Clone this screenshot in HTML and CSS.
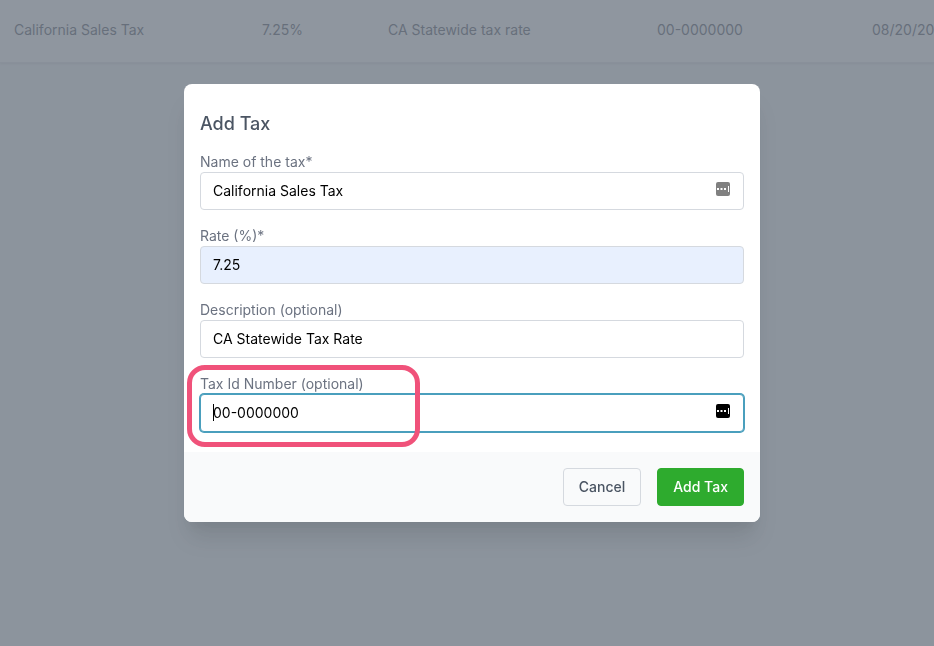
FILE: index.html
```html
<!DOCTYPE html>
<html lang="en">
<head>
    <meta charset="UTF-8">
    <meta name="viewport" content="width=device-width, initial-scale=1.0">
    <title>Add Tax</title>
    <link rel="stylesheet" href="styles.css">
</head>
<body>

    <!-- Tax list -->
    <main class="tax-list">
        <table class="tax-table">
            <tbody>
                <tr>
                    <td class="col-name">California Sales Tax</td>
                    <td class="col-rate">7.25%</td>
                    <td class="col-description">CA Statewide tax rate</td>
                    <td class="col-number">00-0000000</td>
                    <td class="col-date">08/20/2021</td>
                </tr>
            </tbody>
        </table>
    </main>

    <!-- Add Tax modal -->
    <div class="overlay">
        <form class="modal" role="dialog" aria-labelledby="modal-title">
            <div class="modal-body">
                <h3 id="modal-title">Add Tax</h3>

                <div class="field">
                    <label for="name">Name of the tax*</label>
                    <div class="control">
                        <input type="text" id="name" value="California Sales Tax">
                        <svg class="fill-icon muted" viewBox="0 0 14 14" aria-hidden="true">
                            <rect width="14" height="14" rx="2" />
                            <path d="M1 6h2v2H1zM4.500 6h2v2h-2zM8 6h2v2H8zM12 4h1v6h-1z" />
                        </svg>
                    </div>
                </div>

                <div class="field">
                    <label for="rate">Rate (%)*</label>
                    <div class="control">
                        <input type="text" id="rate" class="autofilled" value="7.25">
                    </div>
                </div>

                <div class="field">
                    <label for="description">Description (optional)</label>
                    <div class="control">
                        <input type="text" id="description" value="CA Statewide Tax Rate">
                    </div>
                </div>

                <div class="field">
                    <label for="number">Tax Id Number (optional)</label>
                    <div class="control">
                        <input type="text" id="number" class="focused" value="00-0000000">
                        <span class="caret"></span>
                        <svg class="fill-icon" viewBox="0 0 14 14" aria-hidden="true">
                            <rect width="14" height="14" rx="2" />
                            <path d="M1 6h2v2H1zM4.500 6h2v2h-2zM8 6h2v2H8zM12 4h1v6h-1z" />
                        </svg>
                    </div>
                    <span class="highlight"></span>
                </div>
            </div>

            <div class="modal-footer">
                <button type="button" class="btn">Cancel</button>
                <button type="submit" class="btn btn-primary">Add Tax</button>
            </div>
        </form>
    </div>

</body>
</html>
```
FILE: styles.css
```css
* {
    box-sizing: border-box;
}

body {
    font-family: 'Inter', sans-serif;
    font-size: 14px;
    line-height: 20px;
    background-color: #f2f5f7;
    margin: 0;
    min-height: 100vh;
    overflow: hidden;
}

/* Tax list */
.tax-list {
    overflow: hidden;
    background-color: #fff;
    border-bottom: 1px solid #e5e7eb;
    box-shadow: 0 1px 2px rgba(0, 0, 0, 0.1);
}

.tax-table {
    width: 100%;
    min-width: 1040px;
    table-layout: fixed;
    border-collapse: collapse;
}

.tax-table td {
    padding: 20px 14px 22px;
    color: #5f6672;
    white-space: nowrap;
}

.col-name {
    width: 248px;
}

.col-rate {
    width: 126px;
}

.col-description {
    width: 269px;
}

.col-number {
    width: 215px;
}

/* Modal */
.overlay {
    position: fixed;
    inset: 0;
    display: flex;
    justify-content: center;
    align-items: flex-start;
    padding: 84px 16px 16px 26px;
    background-color: rgba(106, 115, 127, 0.75);
}

.modal {
    width: 100%;
    max-width: 576px;
    background-color: #fff;
    border-radius: 8px;
    box-shadow: 0 20px 25px -5px rgba(0, 0, 0, 0.1), 0 10px 10px -5px rgba(0, 0, 0, 0.04);
}

.modal-body {
    display: flex;
    flex-direction: column;
    gap: 16px;
    padding: 28px 16px 20px;
}

.modal-body h3 {
    margin: 0;
    font-size: 18px;
    line-height: 24px;
    font-weight: 500;
    color: #4b5563;
}

.field {
    position: relative;
}

.field label {
    display: block;
    color: #6b7280;
}

.control {
    position: relative;
}

.control input {
    display: block;
    width: 100%;
    height: 38px;
    padding: 0 12px 2px;
    border: 1px solid #d5d9df;
    border-radius: 4px;
    background-color: #fff;
    color: #000;
    font: inherit;
    outline: none;
}

.control .autofilled {
    background-color: #e8f0fe;
}

.control .focused,
.control input:focus {
    border-color: #4a9fbd;
    box-shadow: 0 0 0 1px #4a9fbd;
}

.caret {
    position: absolute;
    left: 13px;
    top: 10px;
    width: 1px;
    height: 17px;
    background-color: #000;
}

.fill-icon {
    position: absolute;
    top: 10px;
    right: 14px;
    width: 14px;
    height: 14px;
    fill: #000;
}

.fill-icon path {
    fill: #fff;
}

.fill-icon.muted rect {
    fill: #808080;
}

/* Callout around the tax id field */
.highlight {
    position: absolute;
    top: -9px;
    left: -13px;
    width: 233px;
    height: 82px;
    border: 5px solid #f0527a;
    border-radius: 18px;
    pointer-events: none;
}

.modal-footer {
    display: flex;
    justify-content: flex-end;
    gap: 16px;
    padding: 16px;
    background-color: #f9fafb;
    border-radius: 0 0 8px 8px;
}

.btn {
    height: 38px;
    padding: 0 15px;
    border: 1px solid #d5d9df;
    border-radius: 4px;
    background-color: #f9fafb;
    color: #4b5563;
    font: inherit;
    font-weight: 500;
    cursor: pointer;
}

.btn-primary {
    border-color: #2eab2e;
    background-color: #2eab2e;
    color: #fff;
}
```
